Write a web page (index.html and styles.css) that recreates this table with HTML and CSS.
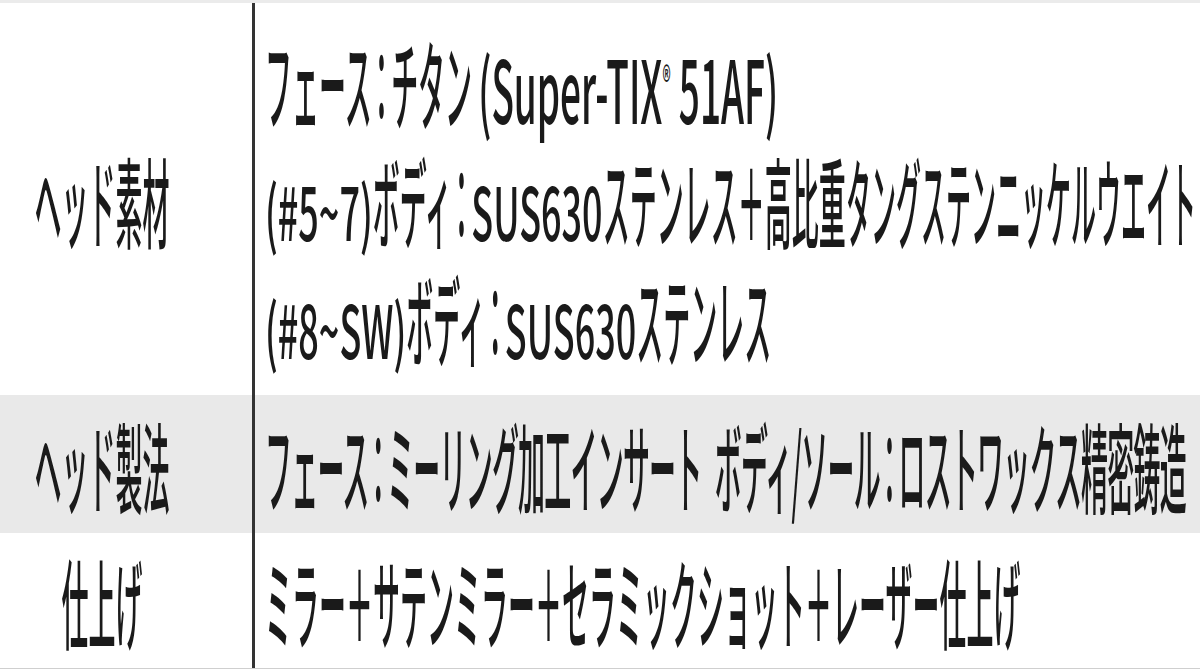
FILE: index.html
```html
<!DOCTYPE html>
<html lang="ja">
<head>
<meta charset="utf-8">
<title>スペック</title>
<link rel="stylesheet" href="styles.css">
</head>
<body>
<div class="sheet">
  <div class="row r1">
    <div class="hd"><span class="t">ヘッド素材</span></div>
    <div class="bd">
      <div class="ln"><span class="t">フェース<span class="c">：</span>チタン <span class="l">(Super-TIX<span class="reg">®</span> 51AF)</span></span></div>
      <div class="ln"><span class="t"><span class="lw">(#5~7)</span>ボディ<span class="c">：</span><span class="lw">SUS630</span>ステンレス＋高比重<span class="tg">タングステンニッケルウエイト</span></span></div>
      <div class="ln"><span class="t"><span class="lw">(#8~SW)</span>ボディ<span class="c">：</span><span class="lw">SUS630</span>ステンレス</span></div>
    </div>
  </div>
  <div class="row r2 shade">
    <div class="hd"><span class="t">ヘッド製法</span></div>
    <div class="bd">
      <div class="ln"><span class="t fit">フェース<span class="c">：</span>ミーリング加工インサート ボディ/ソール<span class="c">：</span>ロストワックス精密鋳造</span></div>
    </div>
  </div>
  <div class="row r3">
    <div class="hd"><span class="t">仕上げ</span></div>
    <div class="bd">
      <div class="ln"><span class="t">ミラー＋サテンミラー＋セラミックショット＋レーザー仕上げ</span></div>
    </div>
  </div>
</div>
</body>
</html>
```
FILE: styles.css
```css
html, body {
  margin: 0;
  padding: 0;
  background: #ffffff;
}
body {
  width: 1200px;
  height: 671px;
  overflow: hidden;
  font-family: "Noto Sans CJK JP", "Noto Sans", sans-serif;
  font-weight: 500;
  color: #1a1a1a;
}
.sheet {
  border-top: 3px solid #ebebeb;
  border-bottom: 1px solid #cfcfcf;
}
.row {
  display: grid;
  grid-template-columns: 255px 1fr;
}
.row.shade {
  background: #e9e9e9;
}
.r1 { height: 392px; }
.r2 { height: 138px; }
.r3 { height: 135px; }
.hd {
  border-right: 3px solid #333333;
  display: flex;
  align-items: center;
  justify-content: center;
  padding-right: 48px;
}
.bd {
  padding-left: 10px;
  display: flex;
  flex-direction: column;
  justify-content: center;
}
.ln {
  height: 118px;
  display: flex;
  align-items: center;
  white-space: nowrap;
}
.t {
  display: inline-block;
  font-size: 27px;
  line-height: 1;
  white-space: nowrap;
  transform: scaleY(3.62);
  transform-origin: 50% 50%;
}
.c {
  margin: 0 -0.14em;
}
/* run that the reference sets slightly narrower to fit the cell */
.tg {
  display: inline-block;
  line-height: 1;
  transform-origin: 0 50%;
  transform: scaleX(0.926);
  margin-right: -28px;
}
.fit {
  letter-spacing: -0.8px;
  word-spacing: 8px;
}
.l, .lw {
  display: inline-block;
  line-height: 0.3;
  letter-spacing: 0;
  transform-origin: 50% 0.586em;
}
.l {
  font-size: 37px;
  transform: scaleY(0.65);
}
.lw {
  font-size: 36px;
  transform: scaleY(0.567);
}
.reg {
  position: relative;
  top: -0.75em;
  font-size: 0.45em;
}
```
